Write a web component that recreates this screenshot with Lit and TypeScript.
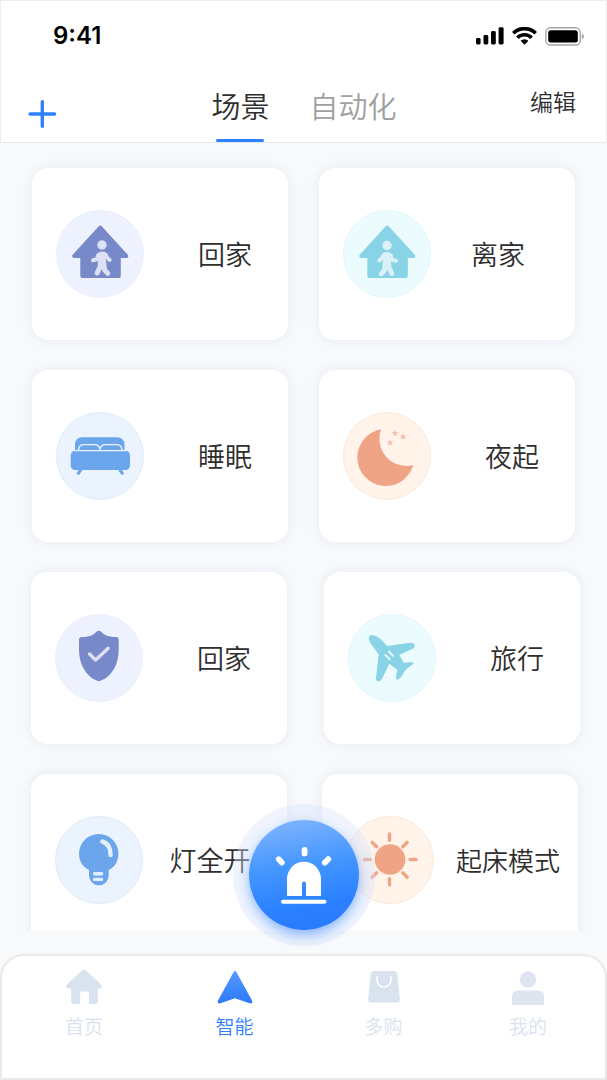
import { LitElement, html, css, svg } from "lit";
import { customElement, property, state } from "lit/decorators.js";
import { classMap } from "lit/directives/class-map.js";

type Tone = "indigo" | "teal" | "blue" | "coral";
type Align = "end" | "middle" | "start";

interface Scene {
  name: string;
  icon: string;
  tone: Tone;
  align: Align;
}

const house = svg`<path fill="currentColor" stroke="currentColor" stroke-width="4" stroke-linejoin="round"
  d="M44.2 17.6 L70.3 46 H62.8 V66 H26.3 V46 H18.2 Z"/>`;

const walker = svg`
  <circle cx="46" cy="35" r="4.7" fill="var(--soft)"/>
  <g fill="none" stroke="var(--soft)" stroke-linecap="round" stroke-linejoin="round">
    <path stroke-width="4" d="M37 50.2 L40.8 49.2 L42.4 44.8 Q46 42.4 49.6 44.6 L51.2 47.8 L53.6 50"/>
    <path stroke-width="7.4" d="M46 46.4 V53"/>
    <path stroke-width="5" d="M44.4 52 L44 57 L41.2 63 M47.6 52 L48.6 60 L51.8 63.4"/>
  </g>`;

const star = (x: number, y: number) => svg`<path fill="currentColor" opacity="0.65"
  transform="translate(${x} ${y})"
  d="M0 -3.2 L1 -1.1 L3.2 -0.9 L1.6 0.7 L2 3 L0 1.9 L-2 3 L-1.6 0.7 L-3.2 -0.9 L-1 -1.1 Z"/>`;

const glyphs: Record<string, unknown> = {
  home: svg`${house}${walker}`,
  leave: svg`${house}<g transform="translate(90 0.5) scale(-1 1)">${walker}</g>`,
  bed: svg`
    <path fill="currentColor" d="M19 39 V32.3 a7 7 0 0 1 7 -7 H61.5 a7 7 0 0 1 7 7 V39 Z"/>
    <rect x="14.7" y="38.7" width="59.3" height="19.3" rx="4.5" fill="currentColor"/>
    <path fill="none" stroke="var(--disc)" stroke-width="1.4"
      d="M18 38.6 H70 M22.5 38.4 V37.5 Q23 32.6 28 32.6 H38.5 Q43.8 32.6 44 37.8 Q44.4 32.6 49.8 32.6 H60.5 Q65.5 32.6 66 37.5 V38.4"/>
    <path stroke="currentColor" stroke-width="3.2" stroke-linecap="round" d="M24.6 58 L22.4 61.2 M64 58 L66.2 61.2"/>`,
  moon: svg`
    <path fill="currentColor" d="M38.2 17.3 A28.5 28.5 0 1 0 70.3 53 A27 27 0 0 1 38.2 17.3 Z"/>
    ${star(52, 21)}${star(60, 24.5)}${star(47, 30.5)}`,
  shield: svg`
    <path fill="currentColor" d="M41.4 17.8 Q43.8 15.8 46.2 17.8 L48.6 20 Q52.6 23 58 23 H61 Q63.7 23.2 63.7 26 V36 C63.7 50 57 62.5 46 66.6 Q43.8 67.6 41.8 66.6 C31 62.5 24 50 24 36 V26 Q24 23.2 26.7 23 H29.6 Q35 23 39 20 Z"/>
    <path fill="none" stroke="var(--soft)" stroke-width="3.4" stroke-linecap="round" stroke-linejoin="round" d="M34.5 40 L40.6 46 L53.2 34.2"/>`,
  plane: svg`
    <path fill="currentColor" d="M21 25.5 Q20 21.2 24.6 21 Q29 21.6 33 25.5 L39.3 32 L62 28.7 Q66.4 28.6 66.7 31.4 Q66.8 34 64 35 L51.3 41 L56 49 Q60 47.8 63.7 48.3 Q66.2 48.8 64.6 50.6 L58.6 55 Q56.6 56.6 55.6 59 Q53.6 63 51 65 Q48.6 66.4 48.1 64.4 Q47.8 60 49.5 56 L41.2 49.8 L34.2 64.4 Q32.8 67.2 30.3 67.2 Q27.8 67 28 64 L30.7 40.5 L24.5 32 Q21.8 28.6 21 25.5 Z"/>
    <path stroke="var(--disc)" stroke-width="1.9" d="M40.3 37 L45.6 42.3 M36.8 40.4 L42.2 45.7"/>`,
  bulb: svg`
    <path fill="currentColor" d="M34 54 C28 51.4 24 45.2 24 37.8 A19.7 19.7 0 1 1 63.4 37.8 C63.4 45.2 59.6 51.4 53.7 54 V59.5 A9.85 9.85 0 0 1 34 59.5 Z"/>
    <path fill="none" stroke="var(--soft)" stroke-width="4.4" stroke-linecap="round" d="M47.3 25.4 Q55.6 28.4 55.6 39"/>
    <path stroke="var(--soft)" stroke-width="3.4" stroke-linecap="round" d="M39.6 57.8 H46.6 M39.6 63.4 H46.6"/>`,
  sun: svg`
    <circle cx="44" cy="43.5" r="15.3" fill="currentColor"/>
    <path stroke="currentColor" stroke-width="3.4" stroke-linecap="round"
      d="M43.5 18 V24.3 M43.5 62.8 V69 M18.4 43.5 H24.4 M64 43.5 H70 M26.2 26.4 L30.6 30.8 M61.2 26.4 L56.8 30.8 M26.2 61.2 L30.6 56.8 M61.2 61.2 L56.8 56.8"/>`,
};

@customElement("scene-card")
export class SceneCard extends LitElement {
  @property({ attribute: false }) scene!: Scene;

  static styles = css`
    :host {
      display: block;
      flex: 1;
      min-width: 0;
    }
    .card {
      display: flex;
      align-items: center;
      width: 100%;
      height: 172px;
      padding: 0 0 0 24px;
      border: 0;
      border-radius: 16px;
      background: #fff;
      box-shadow: 0 0 12px rgba(40, 70, 130, 0.08);
      color: #2e2e2e;
      font-family: "Noto Sans CJK SC", sans-serif;
      font-weight: 350;
      font-size: 27px;
      line-height: 40px;
      cursor: pointer;
    }
    .icon {
      flex: none;
      width: 88px;
      height: 88px;
    }
    .label {
      flex: 1;
      box-sizing: border-box;
      text-align: center;
      white-space: nowrap;
    }
    .end {
      padding-left: 18px;
    }
    .start {
      padding-right: 10px;
    }
    .middle {
      padding-left: 4px;
      font-size: 26px;
    }
    .indigo {
      color: #7889ca;
      --disc: #edf2fe;
      --rim: #e9effd;
      --soft: #dce2f4;
    }
    .teal {
      color: #88d3e6;
      --disc: #ecfbfe;
      --rim: #dff7fb;
      --soft: #dbf1f8;
    }
    .blue {
      color: #6ba6ec;
      --disc: #eaf3fe;
      --rim: #dfebfb;
      --soft: #e3effd;
    }
    .coral {
      color: #efa485;
      --disc: #fff3ea;
      --rim: #fde7d7;
      --soft: #fbe0d2;
    }
  `;

  render() {
    const { name, icon, tone, align } = this.scene;
    return html`
      <button class="card" type="button">
        <svg class="icon ${tone}" viewBox="0 0 88 88" aria-hidden="true">
          <circle cx="44" cy="44" r="43.5" fill="var(--disc)" stroke="var(--rim)" />
          ${glyphs[icon]}
        </svg>
        <span class="label ${align}">${name}</span>
      </button>
    `;
  }
}

const rows: { kind: string; scenes: Scene[] }[] = [
  {
    kind: "even",
    scenes: [
      { name: "回家", icon: "home", tone: "indigo", align: "end" },
      { name: "离家", icon: "leave", tone: "teal", align: "start" },
    ],
  },
  {
    kind: "even",
    scenes: [
      { name: "睡眠", icon: "bed", tone: "blue", align: "end" },
      { name: "夜起", icon: "moon", tone: "coral", align: "end" },
    ],
  },
  {
    kind: "wide",
    scenes: [
      { name: "回家", icon: "shield", tone: "indigo", align: "end" },
      { name: "旅行", icon: "plane", tone: "teal", align: "end" },
    ],
  },
  {
    kind: "loose",
    scenes: [
      { name: "灯全开", icon: "bulb", tone: "blue", align: "start" },
      { name: "起床模式", icon: "sun", tone: "coral", align: "middle" },
    ],
  },
];

const navItems = [
  {
    name: "首页",
    icon: svg`<path fill="currentColor" d="M16.2 1.5 Q18 0 19.8 1.5 L35 15.4 Q36.6 17.2 35.4 18.8 Q34.8 19.6 33.6 19.6 H31.8 V32 Q31.8 35 28.8 35 H23 V23.8 Q23 22.6 21.8 22.6 H15.6 Q14.2 22.6 14.2 23.8 V35 H8.4 Q5.2 35 5.2 32 V19.6 H2.6 Q1.2 19.6 0.6 18.8 Q-0.6 17.2 1 15.4 Z"/>`,
  },
  {
    name: "智能",
    icon: svg`
      <defs><linearGradient id="arrow" x1="0" y1="0" x2="0" y2="1">
        <stop offset="0" stop-color="#5a9bff"/><stop offset="0.6" stop-color="#3a86fb"/><stop offset="1" stop-color="#2d7bfb"/>
      </linearGradient></defs>
      <path fill="url(#arrow)" d="M16.6 3 Q18 1 19.4 3 L35 31.6 Q36.2 34.6 33.2 34.4 L18 29.2 L2.8 34.4 Q-0.2 34.6 1 31.6 Z"/>`,
  },
  {
    name: "多购",
    icon: svg`
      <path fill="currentColor" d="M7.6 2 H28.4 Q31 2.2 31.2 4.6 L33.8 30.4 Q34 33.4 31 33.6 H5 Q2 33.4 2.2 30.4 L4.8 4.6 Q5 2.2 7.6 2 Z"/>
      <path fill="none" stroke="#fff" stroke-width="1.6" stroke-linecap="round" d="M11 7.4 V11 A7 7 0 0 0 25 11 V7.4"/>`,
  },
  {
    name: "我的",
    icon: svg`
      <circle cx="18" cy="10.4" r="8.1" fill="#dfe5f0"/>
      <path fill="#dfe5f0" d="M2 36 V28 Q2 21.6 8.4 21.6 H27.8 Q34.2 21.6 34.2 28 V36 Z"/>`,
  },
];

@customElement("app-root")
export class AppRoot extends LitElement {
  @state() private tab = 0;
  @state() private page = 1;

  static styles = css`
    :host {
      display: flex;
      flex-direction: column;
      box-sizing: border-box;
      height: 100vh;
      background: #f7f9fb;
      font-family: "Noto Sans CJK SC", sans-serif;
      font-weight: 350;
      color: #2e2e2e;
    }
    button {
      padding: 0;
      border: 0;
      background: none;
      color: inherit;
      font: inherit;
      cursor: pointer;
    }
    .header {
      flex: none;
      background: #fff;
      border: 1px solid #ededed;
      border-bottom-color: #e6e8ea;
    }
    .status {
      display: flex;
      justify-content: space-between;
      align-items: center;
      height: 70px;
      padding: 0 22px 0 52px;
      color: #000;
    }
    .time {
      font-family: Inter, sans-serif;
      font-weight: 600;
      font-size: 24px;
      line-height: 28px;
    }
    .signals {
      display: flex;
      align-items: center;
      gap: 8px;
    }
    .signals svg {
      display: block;
    }
    .toolbar {
      display: grid;
      grid-template-columns: 1fr auto 1fr;
      align-items: start;
      height: 71px;
      padding: 0 30px 0 25px;
    }
    .add {
      justify-self: start;
      width: 32px;
      height: 32px;
      margin-top: 27px;
    }
    .add svg,
    .fab svg {
      display: block;
    }
    .tabs {
      display: flex;
      align-self: stretch;
      gap: 40px;
      padding-left: 6px;
    }
    .tab {
      display: flex;
      flex-direction: column;
      align-items: center;
      justify-content: space-between;
      padding-top: 14px;
      font-size: 29px;
      line-height: 40px;
      color: #a0a0a0;
    }
    .tab.on {
      color: #2e2e2e;
    }
    .tab.on::after {
      content: "";
      width: 48px;
      height: 3px;
      border-radius: 2px;
      background: #2f80ff;
    }
    .edit {
      justify-self: end;
      margin-top: 14px;
      font-size: 23px;
      line-height: 32px;
    }
    .stage {
      position: relative;
      display: flex;
      flex: 1;
      min-height: 0;
      margin-bottom: 23px;
    }
    .scenes {
      display: flex;
      flex: 1;
      flex-direction: column;
      gap: 30px;
      padding-top: 25px;
      overflow-y: auto;
      scrollbar-width: none;
    }
    .row {
      display: flex;
      flex: none;
    }
    .even {
      gap: 31px;
      padding: 0 32px;
    }
    .wide {
      gap: 37px;
      padding: 0 27px 0 31px;
    }
    .loose {
      gap: 35px;
      padding: 0 29px 0 31px;
    }
    .halo {
      position: absolute;
      bottom: -15px;
      left: 50%;
      display: grid;
      place-items: center;
      width: 142px;
      height: 142px;
      border-radius: 50%;
      background: rgba(214, 228, 252, 0.4);
      transform: translateX(-50%);
    }
    .fab {
      width: 110px;
      height: 110px;
      border-radius: 50%;
      background: linear-gradient(170deg, #86b7ff 0%, #4496ff 42%, #2a80ff 75%, #2a79ff 100%);
      box-shadow: 0 5px 12px rgba(42, 123, 255, 0.5);
    }
    .nav {
      display: grid;
      flex: none;
      grid-template-columns: 150fr 151fr 147fr 142fr;
      box-sizing: border-box;
      height: 126px;
      padding: 13px 6px 0 7px;
      background: #fff;
      border: 2px solid #e9e9ea;
      border-radius: 24px 24px 0 0;
    }
    .item {
      display: flex;
      flex-direction: column;
      align-items: center;
      gap: 7px;
      color: #d9e2ef;
      font-size: 19px;
      line-height: 28px;
      text-decoration: none;
    }
    .item.on {
      color: #2f80ff;
    }
  `;

  render() {
    return html`
      <header class="header">
        <div class="status">
          <span class="time">9:41</span>
          <div class="signals">
            <svg width="28" height="18" viewBox="0 0 28 18" aria-hidden="true">
              <rect x="0" y="11" width="4.6" height="6.4" rx="1.4" />
              <rect x="7.5" y="8" width="4.8" height="9.4" rx="1.4" />
              <rect x="15" y="4" width="4.8" height="13.4" rx="1.4" />
              <rect x="22.6" y="0.2" width="5" height="17.2" rx="1.4" />
            </svg>
            <svg width="25" height="18" viewBox="0 0 25 18" aria-hidden="true">
              <path fill="none" stroke="#000" stroke-width="3.6" d="M1.3 6.2 A16 16 0 0 1 23.7 6.2 M5.4 10.8 A9.8 9.8 0 0 1 19.6 10.8" />
              <path d="M8.6 13.8 A5.6 5.6 0 0 1 16.4 13.8 L12.5 17.8 Z" />
            </svg>
            <svg width="39" height="19" viewBox="0 0 39 19" aria-hidden="true">
              <rect x="0.8" y="0.8" width="34.4" height="17.2" rx="4.6" fill="none" stroke="#a6a6a6" stroke-width="1.4" />
              <rect x="3.2" y="3.2" width="29.6" height="12.4" rx="2.4" />
              <path fill="#a6a6a6" d="M36.8 6.4 Q39 7.2 39 9.4 Q39 11.6 36.8 12.4 Z" />
            </svg>
          </div>
        </div>
        <div class="toolbar">
          <button class="add" type="button" aria-label="添加">
            <svg width="32" height="32" viewBox="0 0 32 32">
              <path stroke="#2f80ff" stroke-width="3.4" stroke-linecap="round" d="M4 16 H28.6 M16.3 3.8 V28.2" />
            </svg>
          </button>
          <div class="tabs" role="tablist">
            ${["场景", "自动化"].map(
              (name, i) => html`<button
                class=${classMap({ tab: true, on: this.tab === i })}
                type="button"
                role="tab"
                aria-selected=${this.tab === i}
                @click=${() => (this.tab = i)}
              ><span>${name}</span></button>`
            )}
          </div>
          <button class="edit" type="button">编辑</button>
        </div>
      </header>

      <main class="stage">
        <div class="scenes">
          ${rows.map(
            (row) => html`<div class="row ${row.kind}">
              ${row.scenes.map((scene) => html`<scene-card .scene=${scene}></scene-card>`)}
            </div>`
          )}
        </div>
        <div class="halo">
          <button class="fab" type="button" aria-label="报警">
            <svg width="110" height="110" viewBox="0 0 110 110">
              <path fill="#fff" d="M38 76 V59 A17 17.3 0 0 1 72 59 V76 H57 V63.6 A2 2 0 0 0 53 63.6 V76 Z" />
              <g stroke="#fff" stroke-linecap="round">
                <path stroke-width="4" d="M34 81.8 H75.5" />
                <path stroke-width="5.8" d="M55.6 29.8 V33.4 M29.8 39.2 L32.8 42.6 M79.2 39.2 L75.8 42.6" />
              </g>
            </svg>
          </button>
        </div>
      </main>

      <nav class="nav">
        ${navItems.map(
          (item, i) => html`<a
            class=${classMap({ item: true, on: this.page === i })}
            href="#"
            @click=${(e: Event) => {
              e.preventDefault();
              this.page = i;
            }}
          >
            <svg width="36" height="36" viewBox="0 0 36 36" aria-hidden="true">${item.icon}</svg>
            <span>${item.name}</span>
          </a>`
        )}
      </nav>
    `;
  }
}
